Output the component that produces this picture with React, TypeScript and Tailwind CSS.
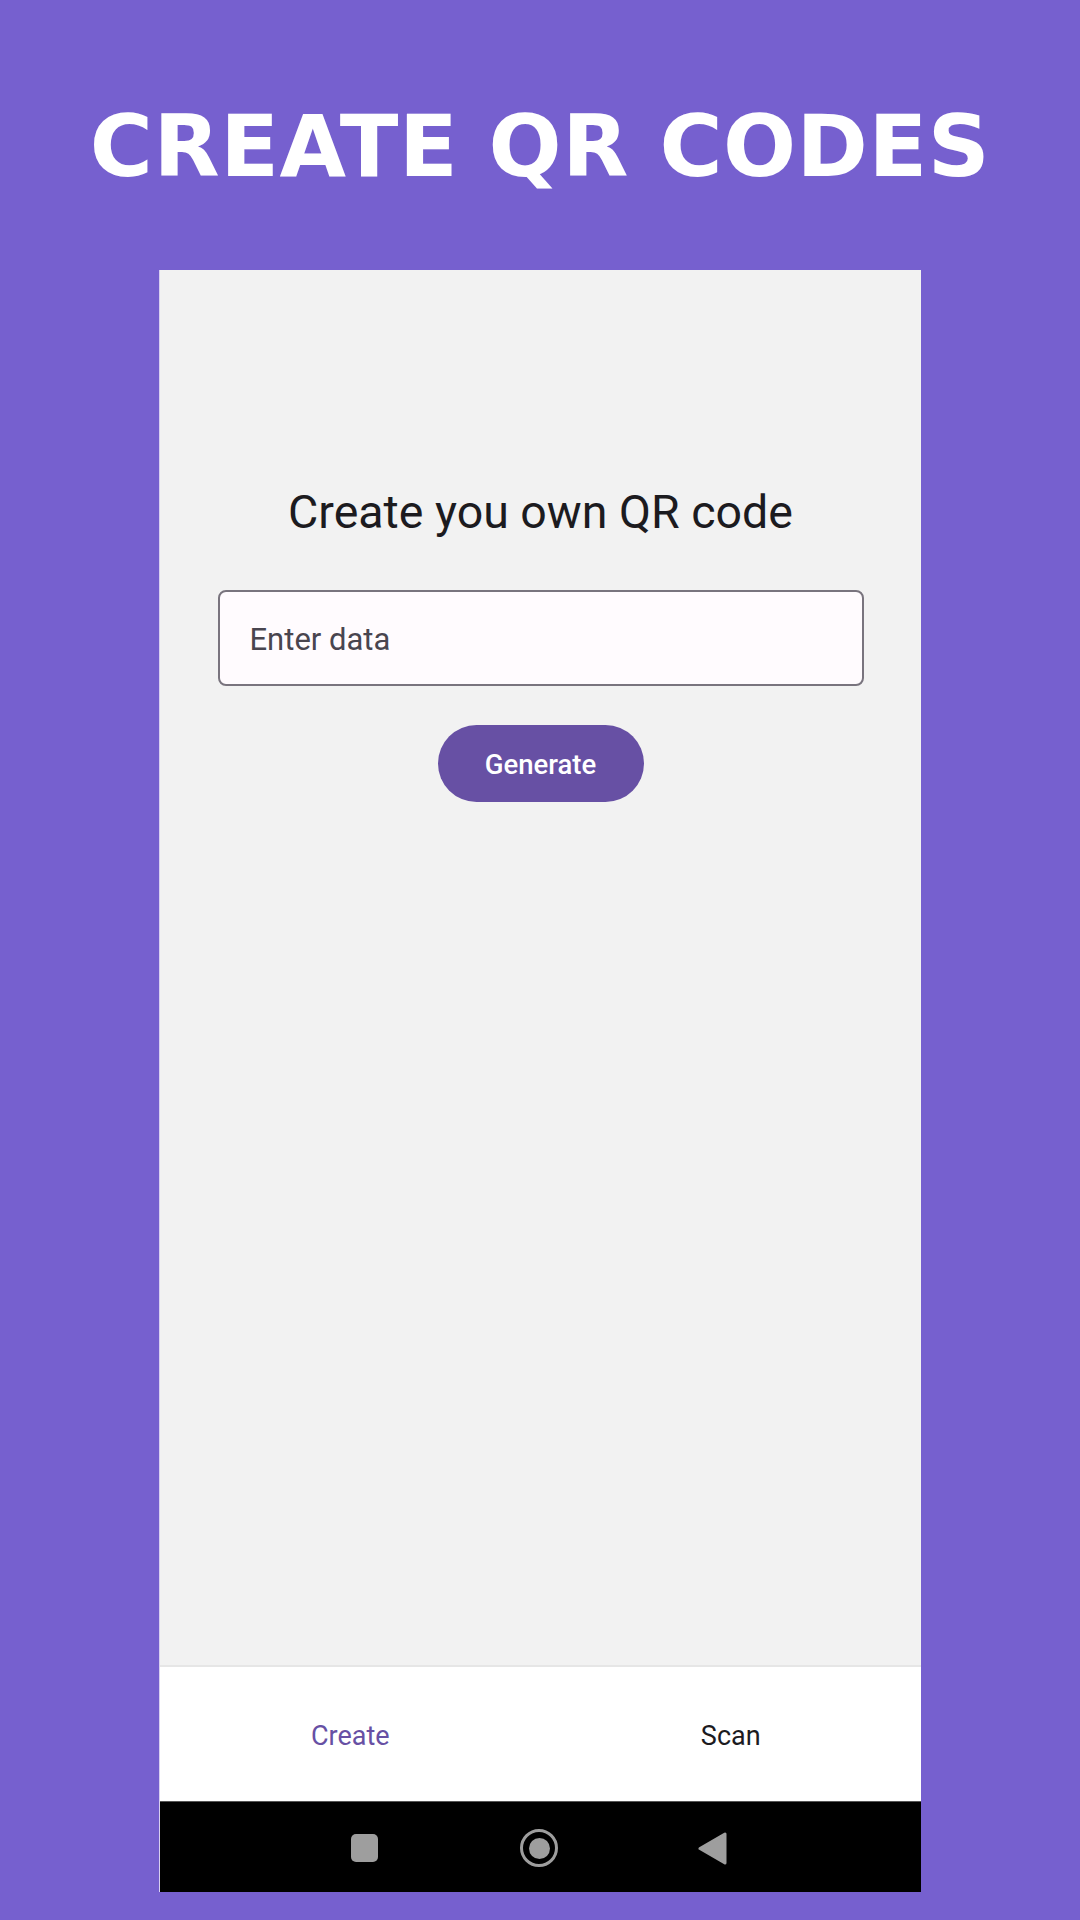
import React from "react";

export default function App() {
  return (
    <div className="w-[1080px] h-[1920px] bg-[#7660cf] flex flex-col items-center overflow-hidden">
      <div
        className="h-[270px] w-full flex justify-center pt-[103px] text-white font-bold text-[86px] leading-[86px] tracking-[0.5px]"
        style={{ fontFamily: '"DejaVu Sans", sans-serif' }}
      >
        CREATE QR CODES
      </div>
      <div
        className="w-[762px] h-[1622px] flex flex-col bg-[#f2f2f2] border-l border-[#d8d0f0]"
        style={{ fontFamily: "Roboto, sans-serif" }}
      >
        <div className="flex-1 flex flex-col items-center pt-[218px]">
          <div className="text-[46.5px] leading-[48px] text-[#1c1b1f]">Create you own QR code</div>
          <div className="mt-[54px] w-[646px] h-[96px] rounded-[8px] border-2 border-[#79747e] bg-[#fffbfe] flex items-center pl-[30px] pt-[4px]">
            <span className="text-[31px] text-[#49454f]">Enter data</span>
          </div>
          <div className="mt-[39px] w-[206px] h-[77px] rounded-full bg-[#6750a4] flex items-center justify-center pt-[3px]">
            <span className="text-[27.5px] font-medium text-white">Generate</span>
          </div>
        </div>
        <div className="h-[136px] bg-white border-t-2 border-[#e6e6e6] flex pt-[4px]">
          <div className="flex-1 flex items-center justify-center text-[27px] text-[#6750a4]">Create</div>
          <div className="flex-1 flex items-center justify-center text-[27px] text-[#1c1b1f]">Scan</div>
        </div>
        <div className="h-[91px] bg-black border-t border-[#555] relative">
          <div className="absolute left-[191px] top-[32px] w-[27px] h-[28px] rounded-[5px] bg-[#9e9e9e]" />
          <div className="absolute left-[360px] top-[27px] w-[38px] h-[38px] rounded-full border-[3px] border-[#9e9e9e] flex items-center justify-center">
            <div className="w-[21px] h-[21px] rounded-full bg-[#9e9e9e]" />
          </div>
          <svg className="absolute left-[538px] top-[30px]" width="29" height="33" viewBox="0 0 29 33">
            <path d="M27 2 L27 31 L2 16.5 Z" fill="#9e9e9e" stroke="#9e9e9e" strokeWidth="3" strokeLinejoin="round" />
          </svg>
        </div>
      </div>
    </div>
  );
}
